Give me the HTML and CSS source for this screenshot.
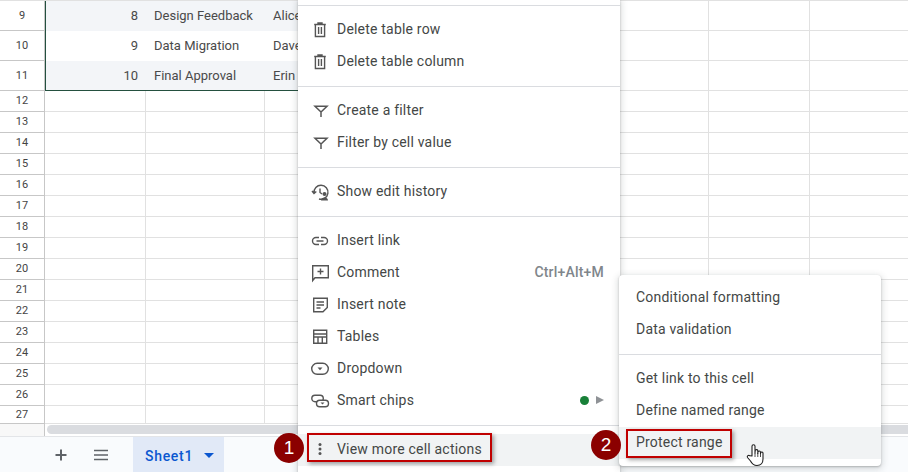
FILE: index.html
```html
<!DOCTYPE html>
<html lang="en">
<head>
  <meta charset="UTF-8">
  <title>Sheet1 - cell menu</title>
  <link rel="stylesheet" href="styles.css">
</head>
<body>
  <div class="sheet">
    <div class="grid">
      <div class="row tall band">
        <div class="head">9</div><div class="cell num">8</div><div class="cell">Design Feedback</div><div class="cell">Alice</div><div class="cell"></div><div class="cell"></div><div class="cell"></div>
      </div>
      <div class="row tall">
        <div class="head">10</div><div class="cell num">9</div><div class="cell">Data Migration</div><div class="cell">Dave</div><div class="cell"></div><div class="cell"></div><div class="cell"></div>
      </div>
      <div class="row tall band last">
        <div class="head">11</div><div class="cell num">10</div><div class="cell">Final Approval</div><div class="cell">Erin</div><div class="cell"></div><div class="cell"></div><div class="cell"></div>
      </div>
      <div class="row"><div class="head">12</div><div class="cell"></div><div class="cell"></div><div class="cell"></div><div class="cell"></div><div class="cell"></div></div>
      <div class="row"><div class="head">13</div><div class="cell"></div><div class="cell"></div><div class="cell"></div><div class="cell"></div><div class="cell"></div></div>
      <div class="row"><div class="head">14</div><div class="cell"></div><div class="cell"></div><div class="cell"></div><div class="cell"></div><div class="cell"></div></div>
      <div class="row"><div class="head">15</div><div class="cell"></div><div class="cell"></div><div class="cell"></div><div class="cell"></div><div class="cell"></div></div>
      <div class="row"><div class="head">16</div><div class="cell"></div><div class="cell"></div><div class="cell"></div><div class="cell"></div><div class="cell"></div></div>
      <div class="row"><div class="head">17</div><div class="cell"></div><div class="cell"></div><div class="cell"></div><div class="cell"></div><div class="cell"></div></div>
      <div class="row"><div class="head">18</div><div class="cell"></div><div class="cell"></div><div class="cell"></div><div class="cell"></div><div class="cell"></div></div>
      <div class="row"><div class="head">19</div><div class="cell"></div><div class="cell"></div><div class="cell"></div><div class="cell"></div><div class="cell"></div></div>
      <div class="row"><div class="head">20</div><div class="cell"></div><div class="cell"></div><div class="cell"></div><div class="cell"></div><div class="cell"></div></div>
      <div class="row"><div class="head">21</div><div class="cell"></div><div class="cell"></div><div class="cell"></div><div class="cell"></div><div class="cell"></div></div>
      <div class="row"><div class="head">22</div><div class="cell"></div><div class="cell"></div><div class="cell"></div><div class="cell"></div><div class="cell"></div></div>
      <div class="row"><div class="head">23</div><div class="cell"></div><div class="cell"></div><div class="cell"></div><div class="cell"></div><div class="cell"></div></div>
      <div class="row"><div class="head">24</div><div class="cell"></div><div class="cell"></div><div class="cell"></div><div class="cell"></div><div class="cell"></div></div>
      <div class="row"><div class="head">25</div><div class="cell"></div><div class="cell"></div><div class="cell"></div><div class="cell"></div><div class="cell"></div></div>
      <div class="row"><div class="head">26</div><div class="cell"></div><div class="cell"></div><div class="cell"></div><div class="cell"></div><div class="cell"></div></div>
      <div class="row short"><div class="head">27</div><div class="cell"></div><div class="cell"></div><div class="cell"></div><div class="cell"></div><div class="cell"></div></div>
    </div>

    <div class="scroller">
      <div class="corner"></div>
      <div class="thumb"></div>
    </div>

    <div class="tabs">
      <button class="tab-btn">
        <svg width="18" height="18" viewBox="0 0 18 18"><path d="M9 3.500v11M3.500 9h11" stroke="#5f6368" stroke-width="2" fill="none"/></svg>
      </button>
      <button class="tab-btn">
        <svg width="18" height="18" viewBox="0 0 18 18"><path d="M2 4.500h14M2 9h14M2 13.500h14" stroke="#5f6368" stroke-width="1.600" fill="none"/></svg>
      </button>
      <div class="tab">
        <span>Sheet1</span>
        <svg width="10" height="5" viewBox="0 0 10 5"><path d="M0 0h10L5 5z" fill="#0b57d0"/></svg>
      </div>
    </div>
  </div>

  <!-- context menu -->
  <div class="menu">
    <div class="menu-top"></div>
    <hr>
    <div class="item">
      <svg class="ico" viewBox="0 0 18 18"><path d="M3.200 4.500h11.600M7 4.500V3h4v1.500M4.400 4.500v12h9.200v-12M7.600 7v7M10.400 7v7" fill="none" stroke="#555" stroke-width="1.400"/></svg>
      <span>Delete table row</span>
    </div>
    <div class="item">
      <svg class="ico" viewBox="0 0 18 18"><path d="M3.200 4.500h11.600M7 4.500V3h4v1.500M4.400 4.500v12h9.200v-12M7.600 7v7M10.400 7v7" fill="none" stroke="#555" stroke-width="1.400"/></svg>
      <span>Delete table column</span>
    </div>
    <hr>
    <div class="item">
      <svg class="ico" viewBox="0 0 18 18"><path d="M4 5.300h12L10 11zM10 10.500V16" fill="none" stroke="#555" stroke-width="1.500"/></svg>
      <span>Create a filter</span>
    </div>
    <div class="item">
      <svg class="ico" viewBox="0 0 18 18"><path d="M4 5.300h12L10 11zM10 10.500V16" fill="none" stroke="#555" stroke-width="1.500"/></svg>
      <span>Filter by cell value</span>
    </div>
    <hr>
    <div class="item">
      <svg class="ico" viewBox="0 0 18 18"><g transform="translate(.5 1.500)"><path d="M2.500 9.500a7 7 0 1 1 5 6M.5 7.500l2 2.500 2.300-2M8.500 5v4l2 1.500" fill="none" stroke="#555" stroke-width="1.400"/><circle cx="13" cy="10.500" r="2" fill="#555"/><path d="M9.500 17c0-2 1.500-3 3.500-3s3.500 1 3.500 3z" fill="#555"/></g></svg>
      <span>Show edit history</span>
    </div>
    <hr>
    <div class="item">
      <svg class="ico" viewBox="0 0 18 18"><path d="M8 6.500H5a3.500 3.500 0 0 0 0 7h3M10 6.500h3a3.500 3.500 0 0 1 0 7h-3M5.500 10h7" fill="none" stroke="#555" stroke-width="1.400"/></svg>
      <span>Insert link</span>
    </div>
    <div class="item">
      <svg class="ico" viewBox="0 0 18 18"><path d="M1.700 17.500V2.700h15.600v12H4zM9.500 5.500v6M6.500 8.500h6" fill="none" stroke="#555" stroke-width="1.400"/></svg>
      <span>Comment</span>
      <span class="keys">Ctrl+Alt+M</span>
    </div>
    <div class="item">
      <svg class="ico" viewBox="0 0 18 18"><path d="M2.700 3.200h13.600v9.300L12 16.800H2.700zM5.500 7h7.500M5.500 10h7.500M5.500 13h4" fill="none" stroke="#555" stroke-width="1.400"/></svg>
      <span>Insert note</span>
    </div>
    <div class="item">
      <svg class="ico" viewBox="0 0 18 18"><path d="M2.700 3.200h13v13h-13zM2.700 7h13M2.700 10h13M7 10v6.200M11.300 10v6.200" fill="none" stroke="#555" stroke-width="1.400"/></svg>
      <span>Tables</span>
    </div>
    <div class="item">
      <svg class="ico" viewBox="0 0 18 18"><rect x=".7" y="4.300" width="16.600" height="11" rx="5.500" fill="none" stroke="#555" stroke-width="1.400"/><path d="M6.500 8.500h5L9 11.300z" fill="#555"/></svg>
      <span>Dropdown</span>
    </div>
    <div class="item">
      <svg class="ico" viewBox="0 0 18 18"><rect x=".8" y="4.300" width="11.500" height="6.400" rx="3.200" fill="none" stroke="#555" stroke-width="1.400"/><rect x="5.500" y="9.300" width="12" height="6.400" rx="3.200" fill="#fff" stroke="#555" stroke-width="1.400"/><path d="M9.500 11.500h4l-2 2z" fill="#555"/></svg>
      <span>Smart chips</span>
      <span class="chips-end">
        <i class="dot"></i>
        <svg width="8" height="8" viewBox="0 0 8 8"><path d="M0 0l8 4-8 4z" fill="#8f9296"/></svg>
      </span>
    </div>
    <hr>
    <div class="item active">
      <svg class="ico" viewBox="0 0 18 18"><circle cx="9" cy="4.500" r="1.500" fill="#555"/><circle cx="9" cy="9" r="1.500" fill="#555"/><circle cx="9" cy="13.500" r="1.500" fill="#555"/></svg>
      <span>View more cell actions</span>
    </div>
  </div>

  <!-- submenu -->
  <div class="submenu">
    <div class="item plain">Conditional formatting</div>
    <div class="item plain">Data validation</div>
    <hr>
    <div class="item plain">Get link to this cell</div>
    <div class="item plain">Define named range</div>
    <div class="item plain active">Protect range</div>
  </div>

  <!-- annotations on top of the screenshot -->
  <div class="mark mark-1"></div>
  <div class="mark mark-2"></div>
  <div class="badge badge-1">1</div>
  <div class="badge badge-2">2</div>

  <svg class="cursor" width="20" height="24" viewBox="0 0 20 24">
    <path d="M6 13V3.200a1.500 1.500 0 0 1 3 0V10l.2-2.200a1.300 1.300 0 0 1 2.600.3V10.500l.2-1.700a1.300 1.300 0 0 1 2.500.3v1.500l.2-.9a1.200 1.200 0 0 1 2.300.4V16c0 3.500-2 6.500-6 6.500-3.500 0-5-1.500-6.500-4.500L1.500 14.500c-.8-1.500 1-2.800 2.300-1.700z" fill="#fff" stroke="#1f1f1f" stroke-width="1.100" stroke-linejoin="round"/>
    <path d="M9 10v4M11.800 10v4M14.500 10.500V14" stroke="#1f1f1f" stroke-width=".8" fill="none"/>
  </svg>
</body>
</html>
```

FILE: styles.css
```css
* {
  box-sizing: border-box;
  margin: 0;
  padding: 0;
}

body {
  width: 908px;
  height: 472px;
  overflow: hidden;
  position: relative;
  background: #fff;
  font-family: Roboto, "Liberation Sans", sans-serif;
  color: #444746;
}

.sheet {
  display: flex;
  flex-direction: column;
  height: 472px;
}

/* Grid */
.grid {
  height: 424px;
  overflow: hidden;
  flex: none;
  border-top: 1px solid #e1e1e1;
}

.row {
  display: grid;
  grid-template-columns: 45px 101px 119px 444px 101px 99px;
  height: 21px;
}

.row.tall {
  grid-template-columns: 45px 101px 119px 100px 344px 101px 99px;
  height: 30px;
}

.row.short {
  height: 18px;
}

.head,
.cell {
  border-bottom: 1px solid #e1e1e1;
  border-right: 1px solid #e1e1e1;
}

.head {
  display: flex;
  align-items: center;
  justify-content: center;
  font-size: 11px;
  color: #444;
  padding-bottom: 2px;
  border-right: 1px solid #c7c7c7;
  border-bottom-color: #c7c7c7;
}

.tall .head,
.short .head {
  padding-bottom: 0;
}

.cell {
  font-size: 13px;
  line-height: 29px;
  padding: 0 8px;
  white-space: nowrap;
  overflow: hidden;
  color: #4a4a4a;
}

.num {
  text-align: right;
}

.tall .cell:nth-child(-n+4) {
  border-bottom: none;
  border-right: none;
}

.tall .cell:nth-child(2) {
  box-shadow: inset 1px 0 0 #24503f;
}

.band .cell:nth-child(-n+4) {
  background: #f3f5f8;
}

.last .cell:nth-child(-n+4) {
  border-bottom: 1px solid #24503f;
}

/* Horizontal scrollbar */
.scroller {
  height: 12px;
  display: flex;
  background: #fff;
  flex: none;
}

.corner {
  width: 45px;
  border-right: 1px solid #c7c7c7;
  background: #f8f8f8;
}

.thumb {
  flex: 1;
  height: 9px;
  margin: 1px 0 0 2px;
  background: #dadce0;
  border-radius: 5px 0 0 5px;
}

/* Sheet tabs */
.tabs {
  flex: 1;
  display: flex;
  background: #f9fbfd;
  padding-left: 41px;
  border-top: 1px solid #e3e5e8;
}

.tab-btn {
  width: 40px;
  border: none;
  background: none;
  display: flex;
  align-items: center;
  justify-content: center;
}

.tab {
  width: 91px;
  margin-left: 12px;
  display: flex;
  align-items: center;
  gap: 11px;
  padding: 2px 0 0 12px;
  background: #e1e9f7;
  color: #0b57d0;
  font-size: 14px;
  font-weight: 500;
  letter-spacing: .7px;
}

/* Menus */
.menu,
.submenu {
  position: absolute;
  background: #fff;
  box-shadow: 0 2px 6px 2px rgba(60, 64, 67, .15), 0 1px 2px rgba(60, 64, 67, .3);
  font-size: 14px;
  letter-spacing: .2px;
}

.menu {
  left: 298px;
  top: 0;
  width: 322px;
  height: 480px;
}

.menu-top {
  height: 5px;
}

.submenu {
  left: 619px;
  top: 275px;
  width: 262px;
  height: 191px;
  padding-top: 7px;
  border-radius: 4px;
}

hr {
  border: none;
  border-top: 1px solid #dadce0;
  margin: 8px 0;
}

.menu-top + hr {
  margin-top: 0;
}

.item {
  display: flex;
  align-items: center;
  height: 32px;
  padding: 0 16px 2px 13px;
  white-space: nowrap;
}

.item.plain {
  padding-left: 17px;
}

.item.active {
  background: #f1f3f4;
}

.ico {
  width: 18px;
  height: 18px;
  margin-right: 8px;
  flex: none;
  overflow: visible;
}

.keys {
  margin-left: auto;
  font-weight: 500;
  color: #80868b;
  font-size: 14px;
}

.chips-end {
  margin-left: auto;
  display: flex;
  align-items: center;
  gap: 7px;
}

.dot {
  display: block;
  width: 9px;
  height: 9px;
  border-radius: 50%;
  background: #188038;
}

/* Red callouts */
.mark {
  position: absolute;
  border: 2px solid #c00000;
  box-shadow: 2px 2px 4px rgba(0, 0, 0, .35);
}

.mark-1 {
  left: 307px;
  top: 433px;
  width: 185px;
  height: 29px;
}

.mark-2 {
  left: 626px;
  top: 429px;
  width: 106px;
  height: 29px;
}

.badge {
  position: absolute;
  width: 30px;
  height: 30px;
  border-radius: 50%;
  background: #8b0000;
  color: #fff;
  font-size: 19px;
  line-height: 30px;
  text-align: center;
  font-family: "Liberation Sans", sans-serif;
}

.badge-1 {
  left: 274px;
  top: 433px;
}

.badge-2 {
  left: 591px;
  top: 430px;
}

.cursor {
  position: absolute;
  left: 746px;
  top: 443px;
}
```
